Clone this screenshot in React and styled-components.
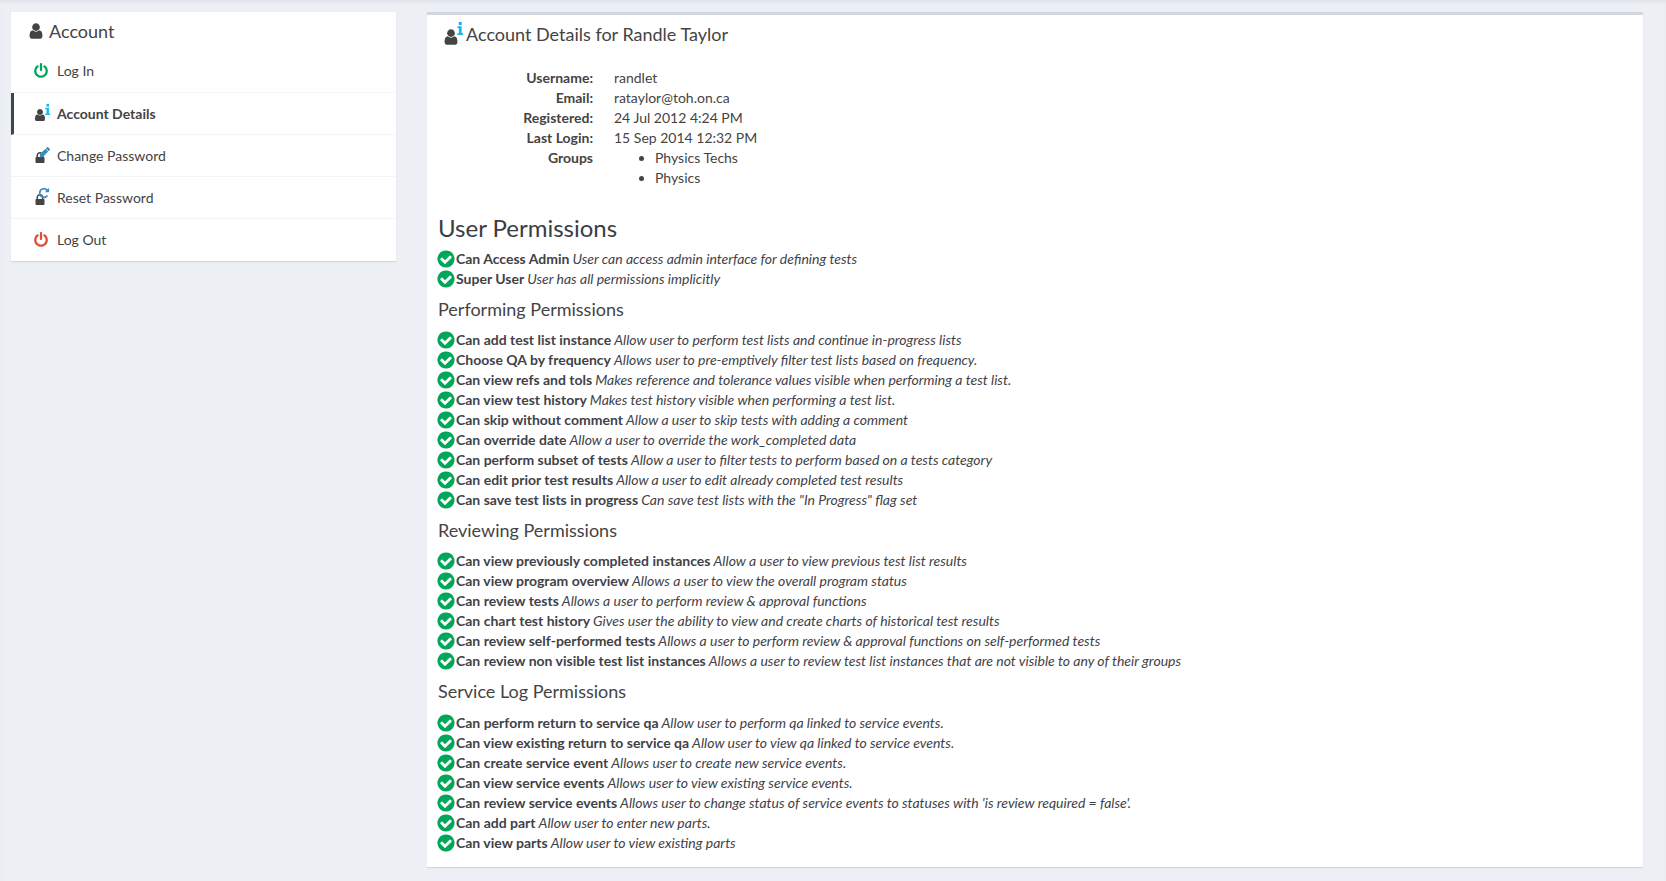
import React from "react";
import styled, { createGlobalStyle } from "styled-components";

const Global = createGlobalStyle`
  html, body { margin: 0; padding: 0; }
  body {
    background: #ecf0f5;
    color: #3f4247;
    font-family: Lato, "Liberation Sans", sans-serif;
    font-size: 14px;
    line-height: 20px;
  }
`;

const Page = styled.div`
  height: 881px;
  box-sizing: border-box;
  padding: 12px 23px 14px 11px;
  display: flex;
  gap: 31px;
  align-items: flex-start;
  box-shadow: inset 0 3px 3px -1px #dfe2e8;
  overflow: hidden;
`;
const Side = styled.aside`
  width: 385px;
  flex: none;
  background: #fff;
  box-shadow: 0 1px 1px rgba(0,0,0,.1);
`;
const SideHead = styled.div`
  height: 37px;
  padding: 0 16px;
  display: flex;
  align-items: center;
  gap: 4px;
  font-size: 18px;
  color: #444;
  margin-top: 0;
`;
const Item = styled.div`
  height: 42px;
  box-sizing: border-box;
  display: flex;
  align-items: center;
  padding-left: ${p => (p.$active ? "19px" : "22px")};
  border-bottom: ${p => (p.$last ? "none" : "1px solid #f4f4f4")};
  border-left: ${p => (p.$active ? "3px solid #3c4650" : "none")};
  font-weight: ${p => (p.$active ? 700 : 400)};
  color: #444;
`;
const ItemIcon = styled.span`
  width: 24px;
  height: 20px;
  flex: none;
  display: block;
  position: relative;
  svg { position: absolute; }
`;
const Main = styled.main`
  width: 1216px;
  height: 855px;
  flex: none;
  box-sizing: border-box;
  background: #fff;
  border-top: 3px solid #d2d6de;
  box-shadow: 0 1px 1px rgba(0,0,0,.1);
  padding: 0 11px;
`;
const MainTitle = styled.div`
  height: 37px;
  display: flex;
  align-items: center;
  padding-left: 4px;
  font-size: 18px;
  color: #444;
  margin-bottom: 16px;
`;
const TitleIcon = styled.span`
  width: 24px;
  height: 26px;
  flex: none;
  position: relative;
  svg { position: absolute; }
`;
const Details = styled.dl`
  margin: 0 0 0 0;
  display: grid;
  grid-template-columns: 155px 1fr;
  column-gap: 21px;
  grid-auto-rows: 20px;
  dt { font-weight: 700; text-align: right; color: #444; }
  dd { margin: 0; color: #444; }
`;
const Groups = styled.ul`
  margin: 0;
  padding: 0 0 0 41px;
  li { height: 20px; }
`;
const H3 = styled.h3`
  margin: 0;
  font-size: 24px;
  font-weight: 400;
  line-height: 30px;
  color: #3a3d42;
  padding-top: 25px;
  margin-bottom: 6px;
`;
const H4 = styled.h4`
  margin: 0;
  font-size: 18px;
  font-weight: 400;
  line-height: 20px;
  color: #444;
  padding-top: 10px;
  margin-bottom: ${p => p.$mb || 11}px;
`;
const Perm = styled.div`
  height: 20px;
  display: flex;
  align-items: center;
  white-space: nowrap;
  color: #3f4247;
  b { font-weight: 700; margin-right: 3px; }
  i { font-style: italic; }
`;
const CheckSvg = styled.svg`
  width: 20px;
  height: 20px;
  flex: none;
  margin: 0 0 0 -2px;
`;

const USER = "M1536 1399q0 109-62.5 187t-150.5 78h-854q-88 0-150.5-78t-62.5-187q0-85 8.5-160.5t31.5-152 58.5-131 94-89 134.5-34.5q131 128 313 128t313-128q76 0 134.5 34.5t94 89 58.5 131 31.5 152 8.5 160.5zm-256-887q0 159-112.5 271.5t-271.5 112.5-271.5-112.5-112.5-271.5 112.5-271.5 271.5-112.5 271.5 112.5 112.5 271.5z";
const CHECK = "M1412 734q0-28-18-46l-91-90q-19-19-45-19t-45 19l-408 407-226-226q-19-19-45-19t-45 19l-91 90q-18 18-18 46 0 27 18 45l362 362q19 19 45 19 27 0 46-19l543-543q18-18 18-45zm252 162q0 209-103 385.500t-279.500 279.500-385.500 103-385.500-103-279.500-279.500-103-385.500 103-385.500 279.500-279.500 385.500-103 385.500 103 279.500 279.500 103 385.500z";
const POWER = "M1664 896q0 156-61 298t-164 245-245 164-298 61-298-61-245-164-164-245-61-298q0-182 80.500-343t226.500-270q43-32 95.500-25t83.500 50q32 42 24.500 94.500t-49.500 84.500q-98 74-151.500 181t-53.500 228q0 104 40.500 198.500t109.500 163.500 163.500 109.500 198.500 40.500 198.500-40.500 163.500-109.500 109.500-163.500 40.500-198.500q0-121-53.500-228t-151.500-181q-42-32-49.500-84.500t24.500-94.500q31-43 84-50t95 25q146 109 226.500 270t80.500 343zm-640-768v640q0 52-38 90t-90 38-90-38-38-90v-640q0-52 38-90t90-38 90 38 38 90z";
const LOCK = "M640 768h512v-192q0-106-75-181t-181-75-181 75-75 181v192zm832 96v576q0 40-28 68t-68 28h-960q-40 0-68-28t-28-68v-576q0-40 28-68t68-28h32v-192q0-184 132-316t316-132 316 132 132 316v192h32q40 0 68 28t28 68z";
const PENCIL = "M960 416l416 416-832 832h-416v-416zm683 96q0 53-37 90l-166 166-416-416 166-165q36-38 90-38 53 0 91 38l235 234q37 39 37 91z";
const REFRESH = "M1664 256v448q0 26-19 45t-45 19h-448q-42 0-59-40-17-39 14-69l138-138q-148-137-349-137-104 0-198.500 40.500t-163.500 109.500-109.500 163.500-40.500 198.500 40.500 198.500 109.500 163.500 163.500 109.500 198.500 40.500q119 0 225-52t179-147q7-10 23-12 15 0 25 9l137 138q9 8 9.500 20.500t-7.500 22.500q-109 132-264 204.500t-327 72.500q-156 0-298-61t-245-164-164-245-61-298 61-298 164-245 245-164 298-61q147 0 284.500 55.500t244.500 156.500l130-129q29-31 70-14 39 17 39 59z";

const Ico = ({ d, size, color, x = 0, y = 0 }) => (
  <svg viewBox="0 0 1792 1792" width={size} height={size} fill={color} style={{ left: x, top: y }}>
    <path d={d} />
  </svg>
);

const Info = ({ x, y, h = 11 }) => (
  <svg viewBox="0 0 6 12" width={h / 2} height={h} fill="#1ab5ef" style={{ left: x, top: y }}>
    <rect x="1.6" y="0" width="2.8" height="2.8" />
    <path d="M0.4 4h3.9v6.4h1.3V12H0.4v-1.600h1.300V5.600H.4z" />
  </svg>
);

const sections = [
  { rows: [
    ["Can Access Admin", "User can access admin interface for defining tests"],
    ["Super User", "User has all permissions implicitly"],
  ]},
  { title: "Performing Permissions", rows: [
    ["Can add test list instance", "Allow user to perform test lists and continue in-progress lists"],
    ["Choose QA by frequency", "Allows user to pre-emptively filter test lists based on frequency."],
    ["Can view refs and tols", "Makes reference and tolerance values visible when performing a test list."],
    ["Can view test history", "Makes test history visible when performing a test list."],
    ["Can skip without comment", "Allow a user to skip tests with adding a comment"],
    ["Can override date", "Allow a user to override the work_completed data"],
    ["Can perform subset of tests", "Allow a user to filter tests to perform based on a tests category"],
    ["Can edit prior test results", "Allow a user to edit already completed test results"],
    ["Can save test lists in progress", "Can save test lists with the \"In Progress\" flag set"],
  ]},
  { title: "Reviewing Permissions", rows: [
    ["Can view previously completed instances", "Allow a user to view previous test list results"],
    ["Can view program overview", "Allows a user to view the overall program status"],
    ["Can review tests", "Allows a user to perform review & approval functions"],
    ["Can chart test history", "Gives user the ability to view and create charts of historical test results"],
    ["Can review self-performed tests", "Allows a user to perform review & approval functions on self-performed tests"],
    ["Can review non visible test list instances", "Allows a user to review test list instances that are not visible to any of their groups"],
  ]},
  { title: "Service Log Permissions", rows: [
    ["Can perform return to service qa", "Allow user to perform qa linked to service events."],
    ["Can view existing return to service qa", "Allow user to view qa linked to service events."],
    ["Can create service event", "Allows user to create new service events."],
    ["Can view service events", "Allows user to view existing service events."],
    ["Can review service events", "Allows user to change status of service events to statuses with 'is review required = false'."],
    ["Can add part", "Allow user to enter new parts."],
    ["Can view parts", "Allow user to view existing parts"],
  ]},
];

export default function App() {
  return (
    <>
      <Global />
      <Page>
        <Side>
          <SideHead>
            <svg viewBox="0 0 1792 1792" width="18" height="18" fill="#444"><path d={USER} /></svg>
            Account
          </SideHead>
          <Item style={{ height: 44 }}>
            <ItemIcon><Ico d={POWER} size={16} color="#00a65a" x={0} y={2} /></ItemIcon>Log In
          </Item>
          <Item $active>
            <ItemIcon><Ico d={USER} size={14} color="#444" x={0} y={4} /><Info x={12} y={0} /></ItemIcon>Account Details
          </Item>
          <Item>
            <ItemIcon>
              <Ico d={LOCK} size={14} color="#444" x={0} y={5} />
              <Ico d={PENCIL} size={12} color="#3c8dbc" x={6} y={0} />
            </ItemIcon>Change Password
          </Item>
          <Item>
            <ItemIcon>
              <Ico d={LOCK} size={14} color="#444" x={0} y={5} />
              <Ico d={REFRESH} size={12} color="#3c8dbc" x={5} y={-1} />
            </ItemIcon>Reset Password
          </Item>
          <Item $last>
            <ItemIcon><Ico d={POWER} size={16} color="#dd4b39" x={0} y={2} /></ItemIcon>Log Out
          </Item>
        </Side>
        <Main>
          <MainTitle>
            <TitleIcon><Ico d={USER} size={18} color="#444" x={0} y={7} /><Info x={15} y={1} h={13} /></TitleIcon>
            Account Details for Randle Taylor
          </MainTitle>
          <Details>
            <dt>Username:</dt><dd>randlet</dd>
            <dt>Email:</dt><dd>rataylor@toh.on.ca</dd>
            <dt>Registered:</dt><dd>24 Jul 2012 4:24 PM</dd>
            <dt>Last Login:</dt><dd>15 Sep 2014 12:32 PM</dd>
            <dt>Groups</dt>
            <dd><Groups><li>Physics Techs</li><li>Physics</li></Groups></dd>
          </Details>
          <div style={{ height: 20 }} />
          {sections.map((s, i) => (
            <section key={i}>
              {s.title ? <H4 $mb={i === 3 ? 12 : 11}>{s.title}</H4> : <H3>User Permissions</H3>}
              {s.rows.map(([a, b]) => (
                <Perm key={a}>
                  <CheckSvg viewBox="0 0 1792 1792" fill="#00a65a"><path d={CHECK} /></CheckSvg>
                  <b>{a}</b><i>{b}</i>
                </Perm>
              ))}
            </section>
          ))}
        </Main>
      </Page>
    </>
  );
}
